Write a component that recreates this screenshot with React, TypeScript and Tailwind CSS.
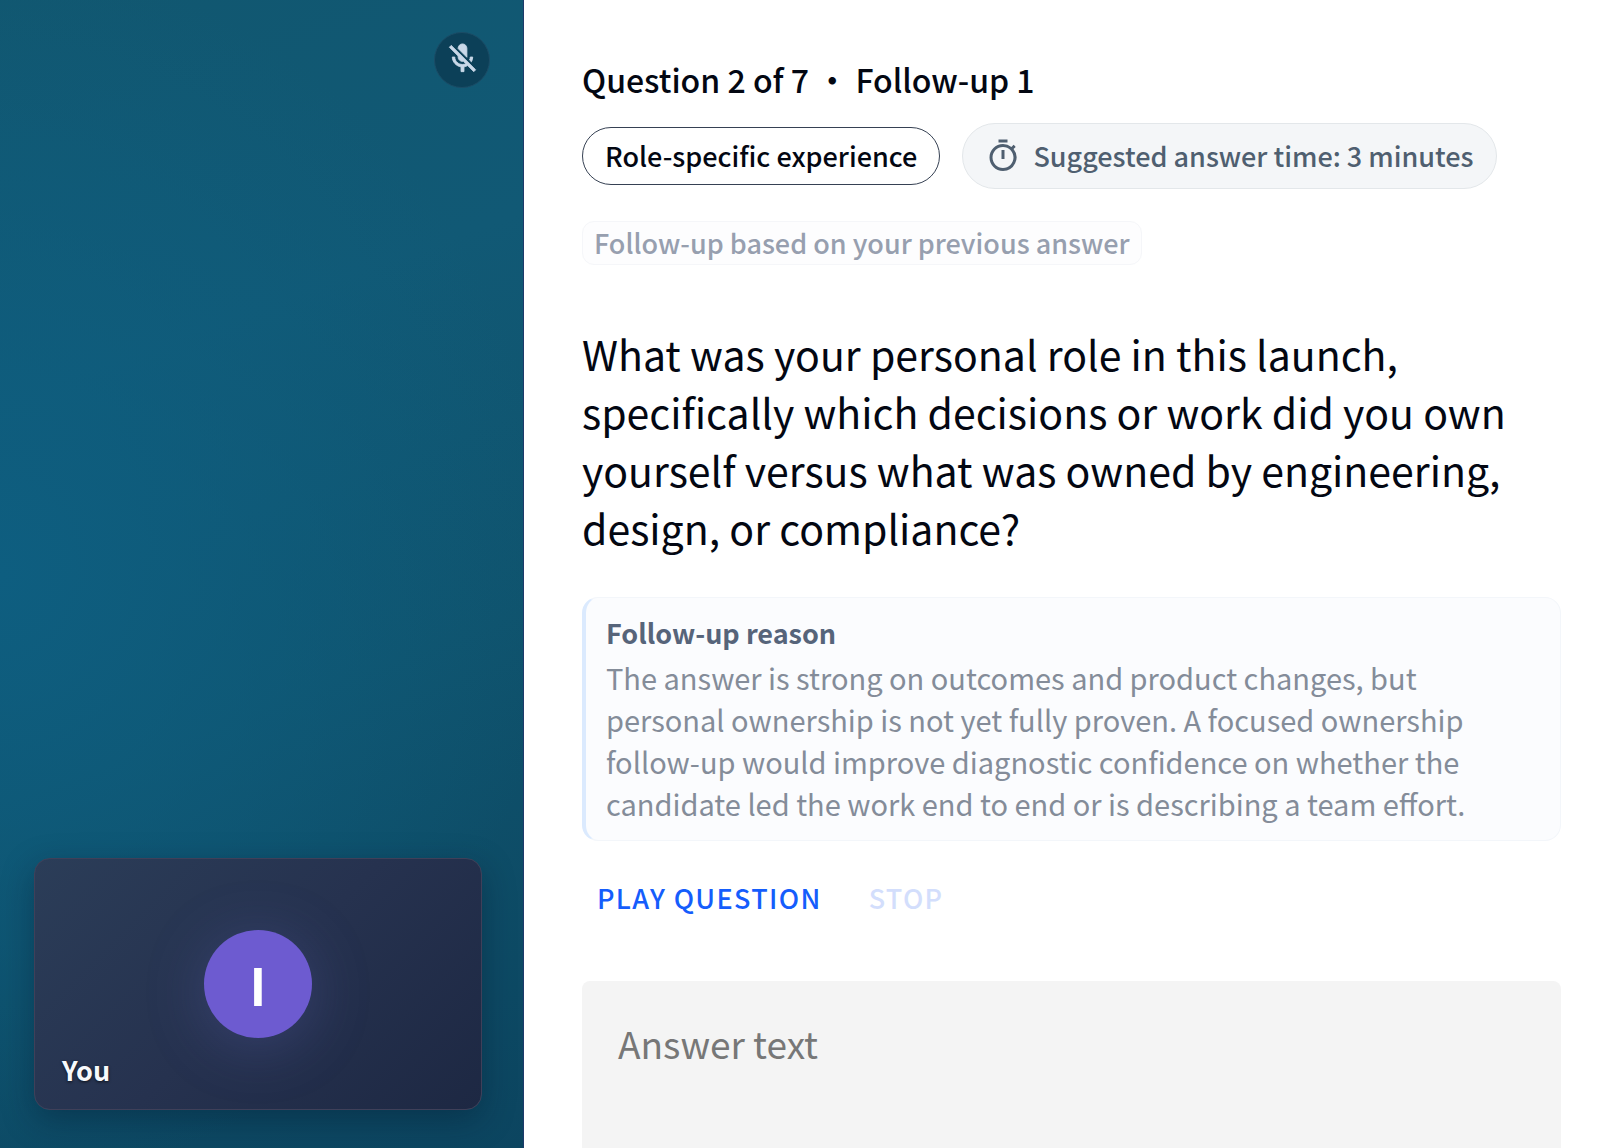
import { MdOutlineTimer } from "react-icons/md";

function MicOffIcon() {
  return (
    <svg
      viewBox="0 0 24 24"
      className="h-[35px] w-[35px]"
      fill="currentColor"
      stroke="currentColor"
      strokeWidth={0.6}
      aria-hidden="true"
    >
      <path d="M19 11h-1.7c0 .74-.16 1.43-.43 2.05l1.23 1.23c.56-.98.9-2.09.9-3.28zm-4.02.17c0-.06.02-.11.02-.17V5c0-1.66-1.34-3-3-3S9 3.34 9 5v.18l5.98 5.99zM4.27 3 3 4.27l6.01 6.01V11c0 1.66 1.33 3 2.99 3 .22 0 .44-.03.65-.08l1.66 1.66c-.71.33-1.5.52-2.31.52-2.76 0-5.3-2.1-5.3-5.1H5c0 3.41 2.72 6.23 6 6.72V21h2v-3.28c.91-.13 1.77-.45 2.54-.9L19.73 21 21 19.73 4.27 3z" />
    </svg>
  );
}

function SelfView() {
  return (
    <div className="relative flex h-[252px] items-center justify-center rounded-2xl border border-[#3f4059] bg-linear-135 from-[#2b3d58] via-[#26324f] to-[#1d2843] shadow-[0_10px_32px_rgba(2,20,40,0.35)]">
      <div className="flex h-[108px] w-[108px] items-center justify-center rounded-full bg-[#6d5bd0] text-[51px] leading-none font-bold text-white shadow-[0_8px_60px_rgba(99,102,190,0.3)]">
        I
      </div>
      <span className="absolute bottom-[21px] left-[27px] text-[27px] leading-9 font-bold text-slate-50 [text-shadow:0_1px_3px_rgba(0,0,0,0.7)]">
        You
      </span>
    </div>
  );
}

function VideoPanel() {
  return (
    <aside className="flex w-[32.75%] shrink-0 flex-col justify-between border-r border-[#1e3a6a] bg-[radial-gradient(ellipse_at_0%_50%,#0e5e80_0%,#0e5e8000_75%),linear-gradient(160deg,#115770_0%,#115975_30%,#0f536d_60%,#0c4560_100%)] pt-8 pr-[41px] pb-[38px] pl-[34px]">
      <button
        type="button"
        aria-label="Microphone off"
        className="-mr-2 flex h-14 w-14 items-center justify-center self-end rounded-full border border-[#1b4c66] bg-[#0c4058] pb-1 text-[#c9d8e8]"
      >
        <MicOffIcon />
      </button>
      <SelfView />
    </aside>
  );
}

function QuestionHeader() {
  return (
    <header>
      <p className="text-[32px] leading-10 font-medium">Question 2 of 7 • Follow-up 1</p>
      <div className="mt-6 flex items-center gap-[22px]">
        <span className="rounded-full border border-gray-700 px-[22px] text-[27px] leading-14 font-medium">
          Role-specific experience
        </span>
        <span className="flex items-center gap-3 rounded-full border border-[#e3e7ea] bg-[#f4f6f8] px-[22px] text-[27px] leading-16 font-medium text-[#4f5f70]">
          <MdOutlineTimer size={36} />
          Suggested answer time: 3 minutes
        </span>
      </div>
      <span className="mt-8 inline-block rounded-xl border border-[#f5f6f9] bg-[#fdfdfe] px-[11px] text-[27px] leading-[42px] font-medium text-[#979faf]">
        Follow-up based on your previous answer
      </span>
    </header>
  );
}

function FollowUpReason() {
  return (
    <section className="mt-[41px] rounded-2xl border border-l-4 border-[#f3f6fa] border-l-[#dbeafe] bg-[#fbfcfe] px-5 pt-[15px] pb-4">
      <h2 className="text-[27px] leading-10 font-bold text-[#56647a]">Follow-up reason</h2>
      <p className="mt-[3px] text-[29px] leading-[42px] text-[#848c99]">
        The answer is strong on outcomes and product changes, but personal ownership is not yet
        fully proven. A focused ownership follow-up would improve diagnostic confidence on whether
        the candidate led the work end to end or is describing a team effort.
      </p>
    </section>
  );
}

export default function App() {
  return (
    <div className="flex h-screen overflow-hidden bg-white font-['Noto_Sans_CJK_SC',sans-serif] text-gray-950">
      <VideoPanel />
      <main className="flex min-w-0 flex-1 flex-col pt-[59px] pr-[39px] pl-[58px]">
        <QuestionHeader />
        <h1 className="mt-[59px] text-[41px] leading-[58px]">
          What was your personal role in this launch, specifically which decisions or work did you
          own yourself versus what was owned by engineering, design, or compliance?
        </h1>
        <FollowUpReason />
        <div className="mt-8 flex gap-4 text-[27px] leading-[50px] font-medium tracking-wider">
          <button type="button" className="px-[15px] text-blue-600">
            PLAY QUESTION
          </button>
          <button type="button" disabled className="px-4 text-[#d3defc]">
            STOP
          </button>
        </div>
        <textarea
          aria-label="Answer text"
          placeholder="Answer text"
          className="mt-[58px] min-h-0 flex-1 resize-none rounded-t-lg bg-[#f4f4f4] px-9 py-[34px] text-[37px] leading-14 outline-none placeholder:text-[#777]"
        />
      </main>
    </div>
  );
}
